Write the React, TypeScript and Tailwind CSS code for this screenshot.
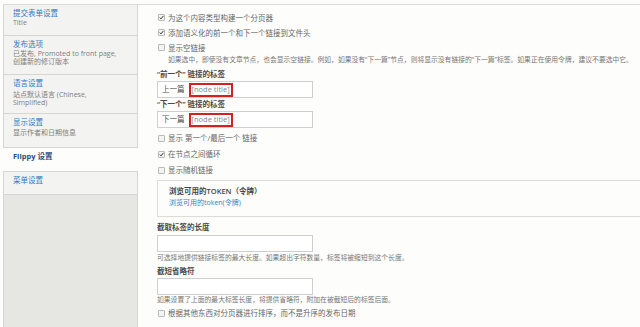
import React from "react";

const font = {
  fontFamily: '"Open Sans", "Noto Sans CJK SC", sans-serif',
};

type Tab = {
  title: string;
  lines?: string[];
  h: string;
  active?: boolean;
  gap?: string;
  lh?: string;
};

const tabs: Tab[] = [
  { title: "提交表单设置", lines: ["Title"], h: "h-[31px]", lh: "leading-[10px]" },
  {
    title: "发布选项",
    lines: ["已发布, Promoted to front page,", "创建新的修订版本"],
    h: "h-[39px]",
    gap: "mt-[1px]",
    lh: "leading-[8px]",
  },
  {
    title: "语言设置",
    lines: ["站点默认语言 (Chinese,", "Simplified)"],
    h: "h-[39px]",
    gap: "mt-[3px]",
    lh: "leading-[8px]",
  },
  { title: "显示设置", lines: ["显示作者和日期信息"], h: "h-[34px]", gap: "mt-[1px]", lh: "leading-[10px]" },
  { title: "Flippy 设置", h: "h-[24px]", active: true },
  { title: "菜单设置", h: "h-[23px]" },
];

function Box({ checked }: { checked?: boolean }) {
  return (
    <span className="w-[7px] h-[7px] border border-[#b9b9b9] bg-[#f4f4f4] rounded-[1px] flex items-center justify-center shrink-0">
      {checked && (
        <svg width="7" height="7" viewBox="0 0 10 10">
          <path d="M1.5 5.2 L4 7.8 L8.8 1.8" fill="none" stroke="#333" strokeWidth="2" />
        </svg>
      )}
    </span>
  );
}

function CheckRow({ label, checked, h = "h-[15px]", mt = "" }: { label: string; checked?: boolean; h?: string; mt?: string }) {
  return (
    <div className={`flex items-center gap-[3px] ${h} ${mt} pl-[1px]`}>
      <Box checked={checked} />
      <span className="text-[7.5px] text-[#666] leading-[10px]">{label}</span>
    </div>
  );
}

function Label({ text, mt }: { text: string; mt: string }) {
  return (
    <div className={`${mt} h-[12px] flex items-center text-[7.5px] font-semibold text-[#4a4a4a]`}>{text}</div>
  );
}

function Input({ prefix }: { prefix?: string }) {
  return (
    <div className="w-[156px] h-[17px] border border-[#cfcfcf] bg-white flex items-center pl-[4px] text-[7.5px]">
      {prefix && (
        <>
          <span className="text-[#555]">{prefix}</span>
          <span className="ml-[4px] border-2 border-[#d42020] h-[14px] px-[1px] flex items-center text-[#888]">
            [node title]
          </span>
        </>
      )}
    </div>
  );
}

export default function App() {
  return (
    <div className="w-[640px] h-[327px] overflow-hidden bg-[#fdfdfb] pt-[4px] pl-[3px]" style={font}>
      <div className="flex h-[323px] border-t border-[#dcdcd9]">
        {/* vertical tabs */}
        <div className="w-[135px] shrink-0 flex flex-col border-l border-r border-[#d6d6d3] bg-[#e6e6e2]">
          {tabs.map((t) =>
            t.active ? (
              <div key={t.title} className={`${t.h} -mr-px -ml-px bg-[#fdfdfb] border-b border-[#d6d6d3] pt-[3px] pl-[10px]`}>
                <div className="text-[7.5px] leading-[10px] font-bold text-[#2c4d76]">{t.title}</div>
              </div>
            ) : (
              <div key={t.title} className={`${t.h} bg-[#f3f3f1] border-b border-[#d6d6d3] pt-[3px] pl-[9px]`}>
                <div className="text-[7.5px] leading-[10px] text-[#2f7bc4]">{t.title}</div>
                {t.lines && (
                  <div className={`${t.gap ?? ""} text-[7px] ${t.lh} text-[#808080]`}>
                    {t.lines.map((l) => (
                      <div key={l}>{l}</div>
                    ))}
                  </div>
                )}
              </div>
            )
          )}
          <div className="flex-1" />
        </div>

        {/* settings panel */}
        <div className="flex-1 pl-[19px] pt-[5px]">
          <CheckRow label="为这个内容类型构建一个分页器" checked />
          <CheckRow label="添加语义化的前一个和下一个链接到文件头" checked />
          <CheckRow label="显示空链接" />
          <div className="pl-[11px] h-[10px] text-[6.8px] leading-[10px] text-[#777] whitespace-nowrap">
            如果选中，即使没有文章节点，也会显示空链接。例如，如果没有“下一篇”节点，则将显示没有链接的“下一篇”标签。如果正在使用令牌，建议不要选中它。
          </div>

          <Label text="“前一个” 链接的标签" mt="mt-[4px]" />
          <Input prefix="上一篇" />
          <Label text="“下一个” 链接的标签" mt="mt-[1px]" />
          <Input prefix="下一篇" />

          <CheckRow label="显示 第一个/最后一个 链接" h="h-[16px]" mt="mt-[2px]" />
          <CheckRow label="在节点之间循环" checked h="h-[16px]" />
          <CheckRow label="显示随机链接" h="h-[16px]" />

          <div className="mt-[2px] w-[520px] h-[37px] border border-[#dcdcd9] bg-[#fdfdfb] pl-[11px] pt-[5px]">
            <div className="text-[7.5px] leading-[10px] font-semibold text-[#444]">浏览可用的TOKEN（令牌）</div>
            <div className="mt-[2px] text-[7px] leading-[10px] text-[#3a80c8]">浏览可用的token(令牌)</div>
          </div>

          <Label text="截取标签的长度" mt="mt-[5px]" />
          <div className="mt-[1px]">
            <Input />
          </div>
          <div className="mt-[1px] h-[10px] text-[6.8px] leading-[10px] text-[#777] whitespace-nowrap">
            可选择地提供链接标签的最大长度。如果超出字符数量，标签将被缩短到这个长度。
          </div>
          <Label text="截短省略符" mt="mt-[3px]" />
          <Input />
          <div className="h-[10px] text-[6.8px] leading-[10px] text-[#777] whitespace-nowrap">
            如果设置了上面的最大标签长度，将提供省略符，附加在被截短后的标签后面。
          </div>
          <CheckRow label="根据其他东西对分页器进行排序，而不是升序的发布日期" h="h-[14px]" mt="mt-[1px]" />
        </div>
      </div>
    </div>
  );
}
